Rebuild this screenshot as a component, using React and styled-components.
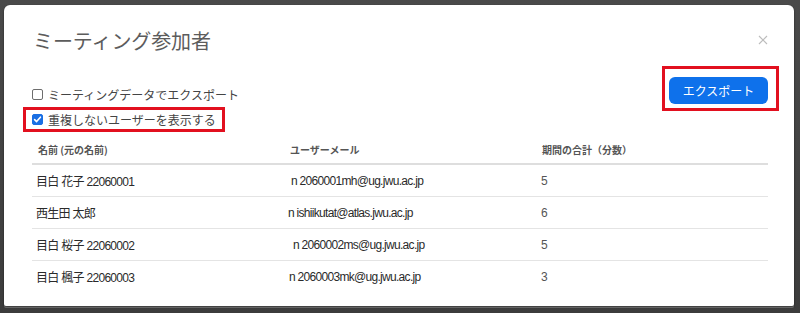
import React from "react";
import styled, { createGlobalStyle } from "styled-components";

const GlobalStyle = createGlobalStyle`
    html, body {
        margin: 0;
        padding: 0;
        background: #454545;
    }
    body {
        font-family: "Noto Sans CJK JP", "Liberation Sans", sans-serif;
    }
`;

const Screen = styled.div`
    box-sizing: border-box;
    width: 800px;
    height: 313px;
    padding: 5px 6px 7px 4px;
    background: linear-gradient(#4a4a4a, #3c3c3c);
`;

const Dialog = styled.div`
    height: 301px;
    background: #fff;
    border-radius: 6px 6px 2px 2px;
    box-shadow: 0 1px 2px rgba(0, 0, 0, 0.6), 0 2px 0 #777;
    display: flex;
    flex-direction: column;
`;

const Header = styled.div`
    display: flex;
    justify-content: space-between;
    align-items: center;
    padding: 22px 26px 0 29px;
`;

const Title = styled.h1`
    margin: 0;
    font-size: 20px;
    line-height: 28px;
    font-weight: 400;
    color: #5c5c5c;
    letter-spacing: -0.1px;
`;

const Close = styled.button`
    border: 0;
    background: none;
    padding: 0;
    width: 10px;
    height: 10px;
    display: flex;
    margin-top: -3px;
    cursor: pointer;
`;

const Controls = styled.div`
    display: flex;
    justify-content: space-between;
    align-items: flex-start;
    margin-top: 11px;
    padding: 0 15px 0 19px;
`;

const Options = styled.div`
    display: flex;
    flex-direction: column;
    align-items: flex-start;
    padding-top: 16px;
`;

const Option = styled.label`
    box-sizing: border-box;
    height: 25px;
    display: flex;
    align-items: center;
    gap: 5px;
    padding: 0 6px;
    border: 3px solid ${(p) => (p.$marked ? "#e2101f" : "transparent")};
    font-size: 12px;
    color: #444;
    white-space: nowrap;
`;

const Box = styled.span`
    box-sizing: border-box;
    width: 11px;
    height: 11px;
    border-radius: 2px;
    border: 1px solid ${(p) => (p.$checked ? "#1a6fe3" : "#6d6d6d")};
    background: ${(p) => (p.$checked ? "#1a6fe3" : "#fff")};
    display: flex;
    align-items: center;
    justify-content: center;
    flex: none;
`;

const ExportFrame = styled.div`
    padding: 8px 8px 4px 4px;
    border: 3px solid #e2101f;
`;

const ExportButton = styled.button`
    width: 99px;
    height: 27px;
    border: 0;
    border-radius: 6px;
    background: #0e71eb;
    color: #fff;
    font-family: inherit;
    font-size: 12px;
    padding: 0;
    cursor: pointer;
`;

const Table = styled.div`
    margin: 4px 26px 0 28px;
    display: grid;
    grid-template-columns: 254px 251px 1fr;
`;

const HeadCell = styled.div`
    height: 27px;
    display: flex;
    align-items: center;
    padding-left: ${(p) => p.$indent || 4}px;
    border-bottom: 2px solid #dedede;
    font-size: 10px;
    font-weight: 700;
    color: #555;
`;

const Cell = styled.div`
    box-sizing: border-box;
    height: 32px;
    display: flex;
    align-items: center;
    padding-left: ${(p) => p.$indent || 4}px;
    border-bottom: 1px solid ${(p) => (p.$last ? "transparent" : "#e4e4e4")};
    font-family: "Liberation Sans", "Noto Sans CJK JP", sans-serif;
    font-size: 12px;
    letter-spacing: -0.7px;
    color: ${(p) => p.$tone || "#2a2a2a"};
    white-space: nowrap;
`;

const Check = () => (
    <svg width="9" height="9" viewBox="0 0 9 9">
        <path d="M1.6 4.6 L3.6 6.6 L7.4 2.2" fill="none" stroke="#fff" strokeWidth="1.6" strokeLinecap="round" strokeLinejoin="round" />
    </svg>
);

const rows = [
    { name: "目白 花子 22060001", mail: "n 2060001mh@ug.jwu.ac.jp", mailIndent: 5, min: 5 },
    { name: "西生田  太郎", mail: "n ishiikutat@atlas.jwu.ac.jp", mailIndent: 2, min: 6 },
    { name: "目白 桜子 22060002", mail: "n 2060002ms@ug.jwu.ac.jp", mailIndent: 7, min: 5 },
    { name: "目白 楓子 22060003", mail: "n 2060003mk@ug.jwu.ac.jp", mailIndent: 3, min: 3 },
];

export default function App() {
    return (
        <Screen>
            <GlobalStyle />
            <Dialog>
                <Header>
                    <Title>ミーティング参加者</Title>
                    <Close aria-label="閉じる">
                        <svg width="10" height="10" viewBox="0 0 10 10">
                            <path d="M1 1 L9 9 M9 1 L1 9" stroke="#bdbdbd" strokeWidth="1.2" />
                        </svg>
                    </Close>
                </Header>

                <Controls>
                    <Options>
                        <Option>
                            <Box />
                            ミーティングデータでエクスポート
                        </Option>
                        <Option $marked>
                            <Box $checked><Check /></Box>
                            重複しないユーザーを表示する
                        </Option>
                    </Options>
                    <ExportFrame>
                        <ExportButton>エクスポート</ExportButton>
                    </ExportFrame>
                </Controls>

                <Table>
                    <HeadCell $indent={6}>名前 (元の名前)</HeadCell>
                    <HeadCell>ユーザーメール</HeadCell>
                    <HeadCell $indent={5}>期間の合計（分数）</HeadCell>
                    {rows.map((r, i) => {
                        const last = i === rows.length - 1;
                        return (
                            <React.Fragment key={r.mail}>
                                <Cell $last={last}>{r.name}</Cell>
                                <Cell $last={last} $indent={r.mailIndent}>{r.mail}</Cell>
                                <Cell $last={last} $tone="#555">{r.min}</Cell>
                            </React.Fragment>
                        );
                    })}
                </Table>
            </Dialog>
        </Screen>
    );
}
